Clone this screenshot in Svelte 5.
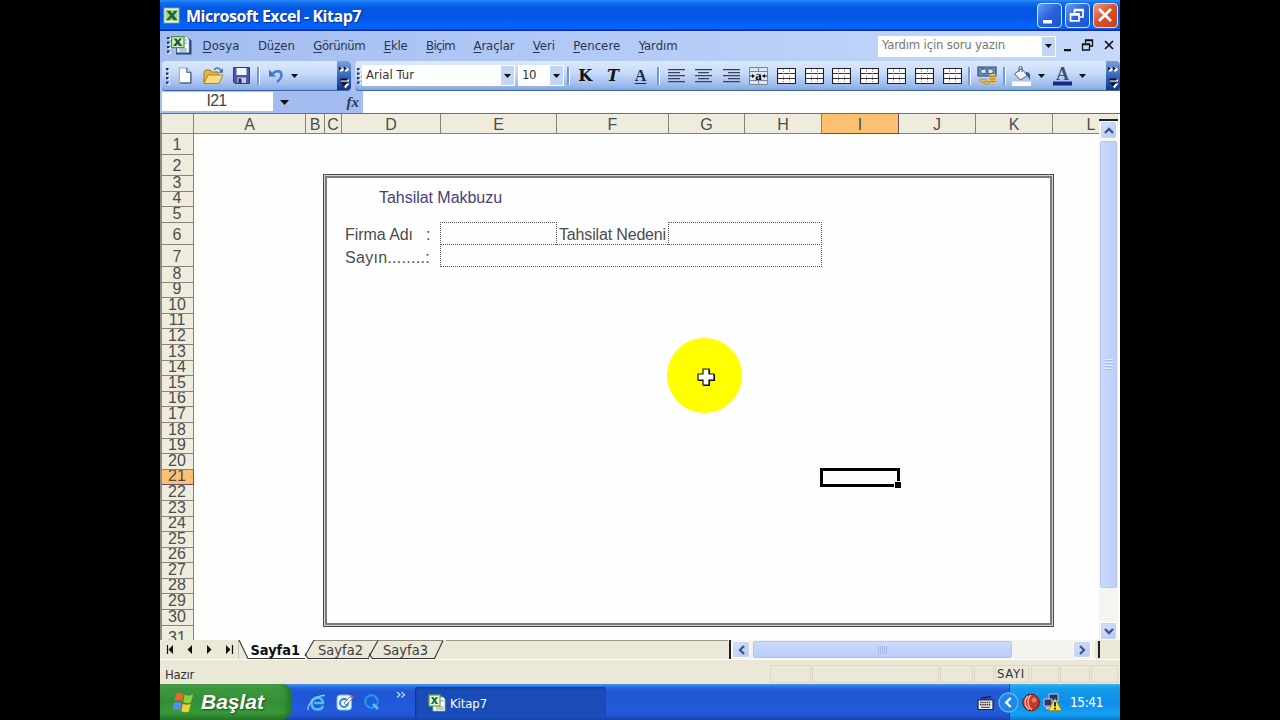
<script>
  // Spreads the letters of a label so that it takes up the given width.
  function fit(node, width) {
    const n = node.textContent.length;
    const natural = node.getBoundingClientRect().width;
    node.style.letterSpacing = (width - natural) / n + 'px';
    node.style.width = width + 'px';
  }

  const menus = [
    ['', 'D', 'osya', 37], ['Dü', 'z', 'en', 37], ['', 'G', 'örünüm', 52],
    ['', 'E', 'kle', 24], ['', 'B', 'içim', 29], ['', 'A', 'raçlar', 41],
    ['', 'V', 'eri', 22], ['', 'P', 'encere', 47], ['', 'Y', 'ardım', 39]
  ];
  const columns = 'ABCDEFGHIJKL'.split('');
  const rows = Array.from({ length: 31 }, (_, i) => i + 1);
  const aligns = [
    [[0, 17], [0, 12], [0, 17], [0, 12], [0, 17]],
    [[0, 17], [3, 11], [0, 17], [3, 11], [0, 17]],
    [[0, 17], [5, 12], [0, 17], [5, 12], [0, 17]]
  ];
</script>

{#snippet caret()}
  <svg class="caret" width="7" height="4" viewBox="0 0 7 4"><path d="M0 0h7L3.5 4z" fill="#111" /></svg>
{/snippet}

{#snippet grip()}
  <svg class="grip" width="4" height="18" viewBox="0 0 4 18">
    {#each [1, 5.5, 10, 14.5] as y}<path d="M1 {y + 1}h3v2h-3z" fill="#fff" /><path d="M0 {y}h2.5v2.2h-2.5z" fill="#1f2f63" />{/each}
  </svg>
{/snippet}

{#snippet more()}
  <svg width="14" height="29" viewBox="0 0 14 29">
    <path d="M3 6.500h2l2 2-2 2H3zM8 6.500h2l2 2-2 2H8z" fill="#fff" />
    <path d="M2 5.500l3 2-3 2zM7 5.500l3 2-3 2z" fill="#101c40" />
    <path d="M4 18.500h8v2H4zM5 22.500h7.500l-4 5z" fill="#fff" />
    <path d="M3.500 17.500h7v2h-7zM3.500 21.500h7L7 25.500z" fill="#0a1020" />
  </svg>
{/snippet}

{#snippet excel(s)}
  <svg width={s} height={s} viewBox="0 0 18 18">
    <rect x=".7" y=".7" width="16.600" height="16.600" fill="#f4faee" stroke="#4e8a51" stroke-width="1.400" />
    <rect x="2.500" y="3" width="13" height="11.500" fill="#a9d39b" />
    <path d="M3.500 4h4.500l1.800 2.800L12 4h3.500l-4 4.700L15.500 14H11l-2-3-2.300 3H3l4.500-5z" fill="#1c6a35" />
  </svg>
{/snippet}

{#snippet book()}
  <svg width="21" height="20" viewBox="0 0 21 20">
    <path d="M7 3.500h11l2.500 2v14H5V8z" fill="#2d457f" />
    <path d="M6 2h9.500L18 4.500v13H6z" fill="#fff" stroke="#8aa0c8" stroke-width=".7" />
    <path d="M13 5h3M13 8h3M8 14h8M8 16h8" stroke="#7797bd" stroke-width="1" />
    <rect x=".6" y="1.600" width="12.400" height="11" fill="#d6edc4" stroke="#4b9149" stroke-width="1.200" />
    <path d="M2.500 3.500h3l1.300 2 1.500-2h2.700L8.200 7l3.300 4H8.300L6.500 9 5 11H2l3.200-4z" fill="#176030" />
  </svg>
{/snippet}

<div class="screen">
  <div class="desktop">
    <header class="title">
      {@render excel(17)}
      <span class="title-text t" use:fit={175}>Microsoft Excel - Kitap7</span>
      <div class="winbtns">
        <span class="wb"><svg width="24" height="24"><path d="M6 17h9v3.500H6z" fill="#fff" /></svg></span>
        <span class="wb"><svg width="24" height="24"><path d="M9.500 10V6.500h8.500v7.500h-3.500M9.500 7.500H18" stroke="#fff" stroke-width="1.700" fill="none" /><path d="M5.500 10.800h8.500v7H5.500zM5.500 12H14" stroke="#fff" stroke-width="1.700" fill="none" /></svg></span>
        <span class="wb close"><svg width="24" height="24"><path d="M6 6l12 12M18 6L6 18" stroke="#fff" stroke-width="2.700" /></svg></span>
      </div>
    </header>

    <nav class="menubar">
      {@render grip()}
      <span class="book">{@render book()}</span>
      <div class="menus">
        {#each menus as m}<span class="t" use:fit={m[3]}>{m[0]}<u>{m[1]}</u>{m[2]}</span>{/each}
      </div>
      <div class="ask"><span class="t" use:fit={123}>Yardım için soru yazın</span><b>{@render caret()}</b></div>
      <svg class="docbtns" width="50" height="16" viewBox="0 0 50 16">
        <path d="M0 11h7v2.200H0z" fill="#111" />
        <path d="M21.500 5V2h7v6h-3M21.500 2.700h7M18.500 6h7v6h-7zM18.500 6.700h7" stroke="#111" stroke-width="1.300" fill="none" />
        <path d="M41 3l8 8M49 3l-8 8" stroke="#111" stroke-width="1.700" />
      </svg>
    </nav>

    <div class="toolbars">
      <div class="tb first">
        {@render grip()}
        <span class="slot">
          <svg width="14" height="17" viewBox="0 0 14 18"><path d="M1 1h8l4 4.500V17H1z" fill="#fafcff" stroke="#8797b5" stroke-width=".9" /><path d="M9 1v4.500h4M13.300 5.500V17H2" fill="none" stroke="#36486f" stroke-width="1.100" /></svg>
        </span>
        <span class="slot">
          <svg width="21" height="19" viewBox="0 0 21 19"><path d="M1 6l1.500-2H7l1.500 2H15v11H1z" fill="#e6b648" stroke="#8c671c" stroke-width=".8" /><path d="M5 9h15l-4 8.500H1z" fill="#fbdc7c" stroke="#a07b2c" stroke-width=".9" /><path d="M11 4c2-3 5-3 7 .5" fill="none" stroke="#42669c" stroke-width="1.300" /><path d="M19.800 2.200v4.500h-4.300z" fill="#42669c" /></svg>
        </span>
        <span class="slot">
          <svg width="17" height="17" viewBox="0 0 17 17"><path d="M.5.500h16v16H2l-1.500-1.500z" fill="#4f58a8" stroke="#30387e" /><path d="M3.500 1h10v7h-10z" fill="#f4f6ff" /><path d="M4.500 10.500h8.500V16H4.500z" fill="#c7cce9" /><path d="M5.500 11.500h3V16h-3z" fill="#272e66" /></svg>
        </span>
        <i class="sep"></i>
        <span class="undo"><svg width="16" height="15" viewBox="0 0 16 15"><path d="M1 1.500V8.500h7z" fill="#3b6fc9" /><path d="M4 6.500C7 2 13.500 2 13.500 7c0 3-2 5-4.500 7" fill="none" stroke="#4b7cd0" stroke-width="2.500" /></svg></span>
        <span class="drop">{@render caret()}</span>
        <span class="end">{@render more()}</span>
      </div>

      <div class="tb second">
        {@render grip()}
        <div class="combo font"><span class="t" use:fit={48}>Arial Tur</span><b>{@render caret()}</b></div>
        <div class="combo size"><span class="t" use:fit={14}>10</span><b>{@render caret()}</b></div>
        <i class="sep s2"></i>
        <span class="slot fmt">K</span>
        <span class="slot fmt it">T</span>
        <span class="slot fmt un">A</span>
        <i class="sep"></i>
        {#each aligns as lines}
          <span class="ico"><svg width="17" height="14">{#each lines as l, i}<path d="M{l[0]} {i * 3 + 0.7}h{l[1]}" stroke="#3b4459" stroke-width="1.300" />{/each}</svg></span>
        {/each}
        <span class="ico"><svg width="19" height="18" viewBox="0 0 19 18"><path d="M.5.500h18v17H.5z" fill="#dbe6f8" stroke="#7d8491" /><path d="M0 4.500h19M0 13.500h19M9.500 0v4.500M9.500 13.500V18" stroke="#7d8491" /><path d="M1 9h4M14 9h4" stroke="#111" /><path d="M3 7l3 2-3 2zM16 7l-3 2 3 2z" fill="#111" /><text x="9.500" y="12.500" text-anchor="middle" font-family="Liberation Serif" font-weight="bold" font-size="13">a</text></svg></span>
        {#each Array(7) as _}
          <span class="ico"><svg width="19" height="16" viewBox="0 0 19 16"><path d="M.5.500h18v15H.5z" fill="#fff" stroke="#222" stroke-width="1.200" /><path d="M1 5.500h17M1 10.500h17" stroke="#333" stroke-width="1" /><path d="M6.500 1v14M12.500 1v14" stroke="#777" stroke-dasharray="1 1" stroke-width=".9" /></svg></span>
        {/each}
        <i class="sep"></i>
        <span class="slot"><svg width="20" height="19" viewBox="0 0 20 19"><path d="M1 1h18v9H1z" fill="#6c8fc4" stroke="#304979" stroke-width="1.200" /><path d="M5 3h4v4.500H6c-3 0-3-4.500 0-4.500zM11 3v4.500h3c3 0 3-4.500 0-4.500z" fill="#d8e8fb" stroke="#2b4170" stroke-width=".8" /><path d="M12.500 8h6v10h-6z" fill="#e9c04a" /><path d="M12.500 10.500h6M12.500 13h6M12.500 15.500h6" stroke="#9a6d1c" stroke-width=".8" /><ellipse cx="6" cy="14.500" rx="4" ry="1.600" fill="#e9bf50" stroke="#9a7838" stroke-width=".6" /><ellipse cx="9.500" cy="17" rx="3" ry="1.300" fill="#e9bf50" stroke="#9a7838" stroke-width=".6" /></svg></span>
        <i class="sep"></i>
        <span class="slot"><svg width="20" height="20" viewBox="0 0 20 20"><path d="M2.500 8l7-5.500 6 7-7 4.500z" fill="#f2f6fb" stroke="#4a5976" /><path d="M7 6V1.500c0-1.500 3-1.500 3 0V6" fill="none" stroke="#4a5976" /><path d="M14 6c4 0 5 3 3.500 8-1-2-1-4-3.500-5z" fill="#2f5298" /><path d="M0 15.500h19V20H0z" fill="#fff" /></svg></span>
        <span class="drop">{@render caret()}</span>
        <span class="slot fc"><svg width="19" height="20" viewBox="0 0 19 20"><text x="9.500" y="13.500" text-anchor="middle" font-family="Liberation Serif" font-weight="bold" font-size="18" fill="#3c4f80">A</text><path d="M0 15.500h19v4H0z" fill="#132b8c" /></svg></span>
        <span class="drop">{@render caret()}</span>
        <span class="end">{@render more()}</span>
      </div>
    </div>

    <div class="formula">
      <div class="name"><span class="t" use:fit={20}>I21</span></div>
      <div class="fx"><svg width="9" height="5" viewBox="0 0 9 5"><path d="M0 0h9L4.500 5z" fill="#111" /></svg><em>fx</em></div>
      <div class="entry"></div>
    </div>

    <main class="work">
      <div class="sheet">
        <div class="corner"></div>
        {#each columns as c, i}
          <div class="ch" class:on={c === 'I'} style:grid-column={i + 2}>{c}</div>
        {/each}
        {#each rows as r}
          <div class="rh" class:on={r === 21} class:short={r === 3 || r === 4 || r === 5 || (r > 7 && r < 31)} style:grid-row={r + 1}><span>{r}</span></div>
        {/each}
        <div class="frame"></div>
        <div class="cell heading"><span class="t" use:fit={123}>Tahsilat Makbuzu</span></div>
        <div class="cell firm"><span class="t" use:fit={68}>Firma Adı</span><span>:</span></div>
        <div class="cell sir"><span class="t" use:fit={85}>Sayın........:</span></div>
        <div class="cell reason"><span class="t" use:fit={107}>Tahsilat Nedeni</span></div>
        <div class="dots d1"></div>
        <div class="dots d2"></div>
        <div class="dots d3"></div>
        <div class="sel"><i></i></div>
        <div class="pointer">
          <svg width="20" height="20" viewBox="0 0 20 20"><path d="M7.500 2.500H14v5h5V14h-5v5H7.500v-5h-5V7.500h5z" fill="#000" /><path d="M7 2h6v5h5v6h-5v5H7v-5H2V7h5z" fill="#fff" stroke="#111" stroke-width="1.200" /></svg>
        </div>
      </div>
      <div class="vscroll">
        <div class="vtop"></div>
        <div class="sb"><svg width="10" height="7"><path d="M1 6l4-4 4 4" /></svg></div>
        <div class="vthumb"><i></i><i></i><i></i><i></i></div>
        <div class="vtrack"></div>
        <div class="sb"><svg width="10" height="7"><path d="M1 1l4 4 4-4" /></svg></div>
      </div>
    </main>

    <div class="tabs">
      <svg class="navs" width="79" height="19" viewBox="0 0 79 19">
        <path d="M5.500 5v9" stroke="#111" stroke-width="1.200" /><path d="M11 5v9L6.500 9.500zM30 5v9l-4.500-4.500zM45 5v9l4.500-4.500zM64 5v9l4.500-4.500z" fill="#111" /><path d="M70.500 5v9" stroke="#111" stroke-width="1.200" />
        <path d="M76.500 0v19" stroke="#c8c4b4" />
      </svg>
      <svg class="strip" width="205" height="19" viewBox="0 0 205 19">
        <path d="M-2 0l9 18.500h57L73 0z" fill="#fff" />
        <path d="M73 .5H202" stroke="#8e8c80" />
        <path d="M-2 0l9 18.500h57M73 0l-9 16M64 13.500l3 5h61M137 .5l-9.500 17M128 13.500l3.500 5h62L202 .5" fill="none" stroke="#333" stroke-width="1.100" />
        <text x="9.500" y="14.500" font-weight="bold" textLength="49.500" lengthAdjust="spacingAndGlyphs" fill="#111">Sayfa1</text>
        <text x="77" y="14.500" textLength="45" lengthAdjust="spacingAndGlyphs">Sayfa2</text>
        <text x="142" y="14.500" textLength="45" lengthAdjust="spacingAndGlyphs">Sayfa3</text>
      </svg>
      <div class="blank"></div>
      <div class="hscroll">
        <div class="sb"><svg width="7" height="10"><path d="M6 1L2 5l4 4" /></svg></div>
        <div class="hthumb"><i></i><i></i><i></i><i></i><i></i></div>
        <div class="htrack"></div>
        <div class="sb"><svg width="7" height="10"><path d="M1 1l4 4-4 4" /></svg></div>
      </div>
      <div class="hend"></div>
    </div>

    <div class="status">
      <span class="t ready" use:fit={29}>Hazır</span>
      <div class="panels"><i></i><i></i><i></i><i></i><i><span class="t" use:fit={28}>SAYI</span></i><i></i><i></i><i></i></div>
    </div>

    <footer class="taskbar">
      <div class="start">
        <svg width="23" height="21" viewBox="0 0 23 21"><path d="M4 2c3-2 5-1.500 7.500 0L10 9.500C7.500 8 5 8 2.500 9z" fill="#ee6530" /><path d="M12.700 2.500c3 1.500 5 1.500 8.300 0l-2 8c-3 1-5 1-7.800-.5z" fill="#8fd03c" /><path d="M2 10.800c3-1.200 5-1 7.600.4L8 18.500C5.500 17 3 17 .5 18z" fill="#5a8df0" /><path d="M10.800 11.800c3 1.500 5 1.200 8 .2l-2 7.500c-3 1-5 1-7.600-.5z" fill="#fbce35" /></svg>
        <span class="t" use:fit={63}>Başlat</span>
      </div>
      <div class="quick">
        <svg width="20" height="19" viewBox="0 0 20 19"><path d="M16 13c-2 5-11 5-11.500-2.500C4.500 3 15.500 2.500 16 10H7" fill="none" stroke="#55b9f8" stroke-width="2.700" /><path d="M1.500 17C-1 13 9 2 18 2.500" fill="none" stroke="#88cdfa" stroke-width="1.300" /></svg>
        <svg width="18" height="18" viewBox="0 0 18 18"><rect x="1" y="2" width="14.500" height="15" rx="3" fill="#e8f6ff" stroke="#72b7e8" /><circle cx="8" cy="10" r="4" fill="#dff0fb" stroke="#2b87c7" stroke-width="1.800" /><path d="M8 10l7-7 2 1.500L10 12z" fill="#fff" stroke="#466c90" stroke-width=".8" /><path d="M14.500 3l2.500 2" stroke="#e06044" stroke-width="2" /></svg>
        <svg width="17" height="18" viewBox="0 0 17 18"><circle cx="8.500" cy="8.500" r="6.300" fill="#1b62d8" stroke="#2f93ea" stroke-width="2" /><path d="M10 11l5 5" stroke="#56bff6" stroke-width="2.600" /></svg>
        <svg class="chev" width="10" height="8" viewBox="0 0 10 8"><path d="M1 1l3 2.700-3 2.700M5.500 1l3 2.700-3 2.700" fill="none" stroke="#b9d5ff" stroke-width="1.400" /></svg>
      </div>
      <div class="task">
        <svg width="18" height="18" viewBox="0 0 18 18"><path d="M5 3h10l2 2v12H5z" fill="#fff" stroke="#8fb58c" stroke-width=".8" /><path d="M11 7h5M8 13h8M8 15h8" stroke="#7ba37f" /><rect x="1" y="1" width="11" height="11" fill="#e8f7dc" stroke="#5da254" stroke-width="1.200" /><path d="M3 3h2.500l1.200 1.700L8 3h2L7.800 6.500 10.300 10H7.800L6.500 8 5 10H2.800l2.500-3.500z" fill="#1d6d37" /></svg>
        <span class="t" use:fit={37}>Kitap7</span>
      </div>
      <div class="gap">
        <svg width="17" height="15" viewBox="0 0 17 15"><path d="M4 4c2-3 3 0 5-1.500s3 .5 5-1" fill="none" stroke="#10182c" stroke-width="1.200" /><path d="M1 5h15v9.500H1z" fill="#f1f1e8" stroke="#1b2231" stroke-width="1.200" /><path d="M3 7.500h11M3 9.800h11" stroke="#30343d" stroke-width="1.400" stroke-dasharray="1.500 .7" /><path d="M4 12.300h9" stroke="#30343d" /></svg>
      </div>
      <div class="tray">
        <svg class="hide" width="21" height="21" viewBox="0 0 21 21"><circle cx="10.500" cy="10.500" r="9.500" fill="#2186e8" stroke="#62b4f8" stroke-width="1.300" /><path d="M12.700 6l-4.500 4.500 4.500 4.500" fill="none" stroke="#fff" stroke-width="2.400" /></svg>
        <svg width="18" height="19" viewBox="0 0 18 19"><circle cx="9" cy="9.500" r="8.300" fill="#cc3425" stroke="#591916" /><path d="M6 3c-4 3-4 10 1 13.500M9 2C4.500 6 5 13 10 17" fill="none" stroke="#f4c6b8" stroke-width="1.300" /><circle cx="12" cy="7" r="2.500" fill="#f0705a" /></svg>
        <svg class="net" width="19" height="19" viewBox="0 0 19 19"><path d="M6 1h9v7H6z" fill="#24306f" stroke="#c6cbdb" /><path d="M1 6h8v7H1z" fill="#353066" stroke="#c6cbdb" /><path d="M3 15h6" stroke="#ccc" stroke-width="2" /><path d="M12 5.500l6.500 12H5.500z" fill="#ffe535" stroke="#9a8414" stroke-width=".7" /><path d="M12 9v4.500M12 14.800v1.600" stroke="#111" stroke-width="1.700" /></svg>
        <span class="t clock" use:fit={33}>15:41</span>
      </div>
    </footer>
  </div>
</div>

<style>
  :global(body) { background: #000; overflow: hidden; }
  .screen { width: 1280px; height: 720px; background: #000; display: flex; justify-content: center; font-family: 'DejaVu Sans Condensed', 'DejaVu Sans', sans-serif; font-stretch: condensed; font-size: 13px; color: #222; }
  .desktop { width: 960px; height: 720px; display: flex; flex-direction: column; overflow: hidden; background: #ece9d8; }
  .desktop * { box-sizing: border-box; }
  svg { display: block; flex: none; }
  .t { display: inline-block; white-space: nowrap; flex: none; }
  u { text-underline-offset: 2px; }

  .title { height: 31px; flex: none; display: flex; align-items: center; padding: 1px 2px 0 4px; background: linear-gradient(#2b8bfb 0, #1272f0 8%, #0458e2 25%, #0355e4 55%, #0263fb 75%, #0262fa 92%, #0a2f9c 97%, #0a2f9c); }
  .title-text { margin-left: 5px; font: bold 16px/22px 'Open Sans', sans-serif; color: #fff; text-shadow: 1px 1px 1px #0c2f94; }
  .title > :global(svg) { margin-top: -2px; margin-left: -1px; margin-right: 1px; }
  .winbtns { margin: -2px 0 0 auto; display: flex; gap: 3px; }
  .wb { width: 25px; height: 25px; border: 1px solid #d4e4fd; border-radius: 4px; background: linear-gradient(135deg, #6b9df6, #2a60dc 50%, #1d55cf); }
  .wb.close { background: linear-gradient(135deg, #f19a7d, #dd4d25 50%, #c8401c); }
  .wb svg { margin: -1px; }

  .menubar { height: 30px; flex: none; display: flex; align-items: center; padding-left: 7px; background: linear-gradient(90deg, #a3bdf0, #b3caf6 45%, #c6d9fa); }
  .menubar :global(.grip) { margin-top: -3px; }
  .book { margin: 0 0 2px; width: 29px; }
  .menus { display: flex; gap: 18.400px; margin-left: 2.500px; line-height: 20px; color: #2a3450; }
  .ask { margin-left: auto; width: 178px; height: 21px; background: #fff; display: flex; justify-content: space-between; align-items: center; padding: 0 1px 0 4px; margin-right: 8px; color: #777; line-height: 19px; }
  .ask .t { margin-top: -3px; }
  .ask b, .combo b { width: 13px; height: 19px; background: #c4d6f7; display: flex; align-items: center; justify-content: center; }
  .docbtns { margin-right: 6px; }

  .toolbars { height: 30px; flex: none; display: flex; gap: 4px; padding-left: 2px; background: #a9c2f2; }
  .tb { height: 30px; display: flex; align-items: center; background: linear-gradient(#dce9fd, #c8dbf9 40%, #a6c2ef 75%, #86a9e0); border-bottom: 1px solid #3c65b0; border-radius: 4px; overflow: hidden; }
  .first { width: 189px; padding-left: 4px; }
  .second { width: 765px; padding-left: 2px; border-radius: 4px 0 0 4px; }
  .tb :global(.grip) { margin-right: 1px; }
  .first .slot { position: static; width: 28px; }
  .slot { width: 27.700px; flex: none; display: flex; justify-content: center; }
  .sep { width: 7.300px; height: 18px; flex: none; display: flex; justify-content: center; }
  .sep::before { content: ''; width: 2px; background: #7798d6; border-right: 1px solid #fff; }
  .undo { width: 27px; flex: none; display: flex; justify-content: center; }
  .drop { width: 11px; flex: none; display: flex; justify-content: center; }
  .fc { margin-left: 2px; }
  .end { margin-left: auto; height: 30px; background: linear-gradient(#7ca0dd, #3a65bb 50%, #10307c); border-radius: 0 4px 4px 0; }
  .combo { height: 21px; flex: none; background: #fff; display: flex; align-items: center; justify-content: space-between; padding: 0 1px 0 4px; line-height: 17px; color: #333; }
  .combo .t { margin-top: -2px; }
  .combo.font { width: 153px; margin-right: 3px; }
  .combo.size { width: 46px; }
  .s2 { margin-left: 1px; margin-right: -1px; }
  .fmt { font: bold 16px/20px 'DejaVu Serif', serif; color: #111; }
  .it { font-style: italic; }
  .un { font: bold 16px/15px 'Liberation Serif', serif; color: #1b2a55; text-decoration: underline; text-underline-offset: 2px; }
  .second .un + .sep { margin-right: .700px; }
  .ico { width: 27.600px; flex: none; display: flex; justify-content: center; }

  .formula { height: 22px; flex: none; display: flex; padding-left: 2px; background: #a4bdf0; }
  .name { width: 111px; height: 19px; margin-top: 1px; background: #fff; display: flex; justify-content: center; font: 16px/18px 'Liberation Sans', sans-serif; color: #444; padding-right: 2px; }
  .fx { width: 90px; display: flex; align-items: center; justify-content: space-between; padding: 0 4px 0 7px; }
  .fx em { font: italic bold 15px/18px 'Liberation Serif', serif; color: #2d3753; }
  .entry { flex: 1; background: #fff; }

  .work { height: 527px; flex: none; display: flex; border-left: 2px solid #8d8c84; border-top: 1px solid #6e6d66; background: #fffffb; }
  .sheet { position: relative; width: 937px; height: 526px; overflow: hidden; display: grid;
    grid-template-columns: 32px 112px 19px 17px 99px 116px 112px 76px 77px 77px 77px 77px 77px;
    grid-template-rows: 20px 21px 21px 16px 15px 16px 22px 22px repeat(23, 15.600px) 22px;
    font: 16px/18px 'Liberation Sans', sans-serif; color: #4c4c4c; background: #fefefe; }
  .corner, .ch, .rh { background: #efecde; border-right: 1px solid #85847a; border-bottom: 1px solid #85847a; }
  .corner { grid-area: 1 / 1; }
  .ch { grid-row: 1; text-align: center; line-height: 21px; }
  .rh { grid-column: 1; display: flex; justify-content: center; align-items: flex-end; overflow: hidden; }
  .rh span { display: block; line-height: 18px; margin-right: 1px; }
  .rh.short span { line-height: 12px; margin-bottom: 2px; }
  .on { background: #fcc071; border-color: #6d4a63; }
  .frame { grid-area: 4 / 4 / 32 / 13; margin: -2px -1px -1px -2px; border: 1px solid #4c4c4c; box-shadow: inset 0 0 0 1px #d2d2cd, inset 0 0 0 3px #7c7c7c; z-index: 1; }
  .cell { display: flex; align-items: flex-end; white-space: pre; }
  .heading { grid-area: 5 / 5 / 6 / 7; padding-left: 37px; color: #473f7c; align-self: end; }
  .firm { grid-area: 7 / 5; padding: 0 0 1px 3px; }
  .firm span + span { margin-left: 13px; }
  .sir { grid-area: 8 / 5; padding-left: 3px; }
  .reason { grid-area: 7 / 7; padding: 0 0 1px 2px; }
  .dots { border: 1px dotted #555; margin: -1px 0 0 -1px; }
  .d1 { grid-area: 7 / 6; border-bottom: 0; }
  .d2 { grid-area: 7 / 8 / 8 / 10; border-bottom: 0; }
  .d3 { grid-area: 8 / 6 / 9 / 10; }
  .sel { position: absolute; left: 658px; top: 354px; width: 80px; height: 19px; border: 3px solid #000; }
  .sel i { position: absolute; right: -4px; bottom: -4px; width: 7px; height: 7px; background: #000; border: solid #fff; border-width: 1px 0 0 1px; }
  .pointer { position: absolute; left: 505px; top: 224px; width: 75px; height: 75px; border-radius: 50%; background: #ff0; display: flex; align-items: center; justify-content: center; padding: 2px 0 0 2px; }

  .vscroll { width: 19px; display: flex; flex-direction: column; align-items: center; background: #f5f4ee; }
  .vtop { height: 7px; width: 100%; background: #ece9d8; border-bottom: 2px solid #222; flex: none; }
  .sb { width: 17px; height: 18px; flex: none; background: linear-gradient(135deg, #d6e2fd, #b5c9f8); border: 1px solid #fff; outline: 1px solid #c5d4f5; outline-offset: -2px; border-radius: 3px; display: flex; align-items: center; justify-content: center; }
  .sb path { fill: none; stroke: #405581; stroke-width: 2.300; }
  .vthumb { width: 17px; height: 447px; margin-top: 2px; background: linear-gradient(90deg, #cbdafe, #bacdfb); border: 1px solid #b5c8f2; border-radius: 2px; display: flex; flex-direction: column; align-items: center; justify-content: center; gap: 1px; }
  .vthumb i { width: 8px; height: 2px; background: #e8f0ff; border-bottom: 1px solid #a3baea; }
  .vtrack { flex: 1; }

  .tabs { height: 20px; flex: none; display: flex; padding-left: 2px; background: #ebe8d8; border-bottom: 1px solid #fff; }
  .strip { overflow: visible; font: 14px 'DejaVu Sans Condensed', sans-serif; fill: #3c3c3c; }
  .blank { width: 282px; flex: none; border-top: 1px solid #9b998b; }
  .hscroll { width: 366px; flex: none; display: flex; align-items: center; border-left: 2px solid #222; padding-left: 1px; background: #f4f3ed; margin-left: 1px; }
  .hscroll .sb { width: 18px; height: 17px; }
  .hthumb { width: 259px; height: 17px; margin-left: 3px; background: linear-gradient(#cbdafe, #b9cdfb); border: 1px solid #b2c6f0; border-radius: 2px; display: flex; align-items: center; justify-content: center; gap: 1px; }
  .hthumb i { width: 1px; height: 8px; background: #a3b9e8; }
  .htrack { flex: 1; }
  .hscroll .htrack + .sb { margin-right: 4px; }
  .hend { flex: none; width: 3px; margin: 1px 0 1px 2px; border-right: 2px solid #222; background: #e5e1cf; }

  .status { height: 24px; flex: none; display: flex; align-items: center; justify-content: space-between; padding: 3px 2px 0 5px; background: #ebe8d7; color: #333; }
  .ready { margin-top: 1px; }
  .panels { display: grid; grid-template-columns: 41px 127px 33px 20px 34px 28px 30px 27px; gap: 1.200px; height: 17px; }
  .panels i { border: 1px solid #dcd8c5; font-style: normal; line-height: 16px; display: flex; justify-content: center; }
  .panels .t { margin-left: -3px; }

  .taskbar { height: 36px; flex: none; display: flex; background: linear-gradient(#4a93ee 0, #2767e0 10%, #1f55d2 22%, #245bde 75%, #2052cc 90%, #1941a5); color: #fff; }
  .start { width: 132px; flex: none; display: flex; align-items: center; padding: 0 0 0 12px; border-radius: 0 10px 12px 0; background: linear-gradient(#68b366 0, #3d9a3e 12%, #338f36 50%, #379b39 80%, #28772d); box-shadow: inset -4px 0 6px #24732a; }
  .start .t { margin-left: 6px; font: italic bold 21px/28px 'Liberation Sans', sans-serif; text-shadow: 1px 1px 2px #1b4b1e; }
  .quick { width: 123px; flex: none; display: flex; align-items: center; padding: 0 0 0 15px; gap: 9px; }
  .quick .chev { margin: -14px 0 0 7px; }
  .task { width: 191px; height: 32px; margin-top: 3px; flex: none; display: flex; align-items: center; gap: 4px; padding-left: 13px; border-radius: 2px; background: #1a4cb7; box-shadow: inset 1px 1px 2px #0f3488; }
  .gap { flex: 1; display: flex; justify-content: flex-end; align-items: center; padding: 1px 15px 0 0; }
  .tray { width: 111px; flex: none; display: flex; align-items: center; background: linear-gradient(#3fb3f5 0, #149ceb 12%, #0f8eea 50%, #14a0f2 85%, #0d78c8); border-left: 1px solid #0b3fa8; }
  .hide { margin-left: -12px; }
  .tray svg + svg { margin-left: 3px; }
  .clock { margin-left: 8px; font-size: 13.500px; }
</style>
